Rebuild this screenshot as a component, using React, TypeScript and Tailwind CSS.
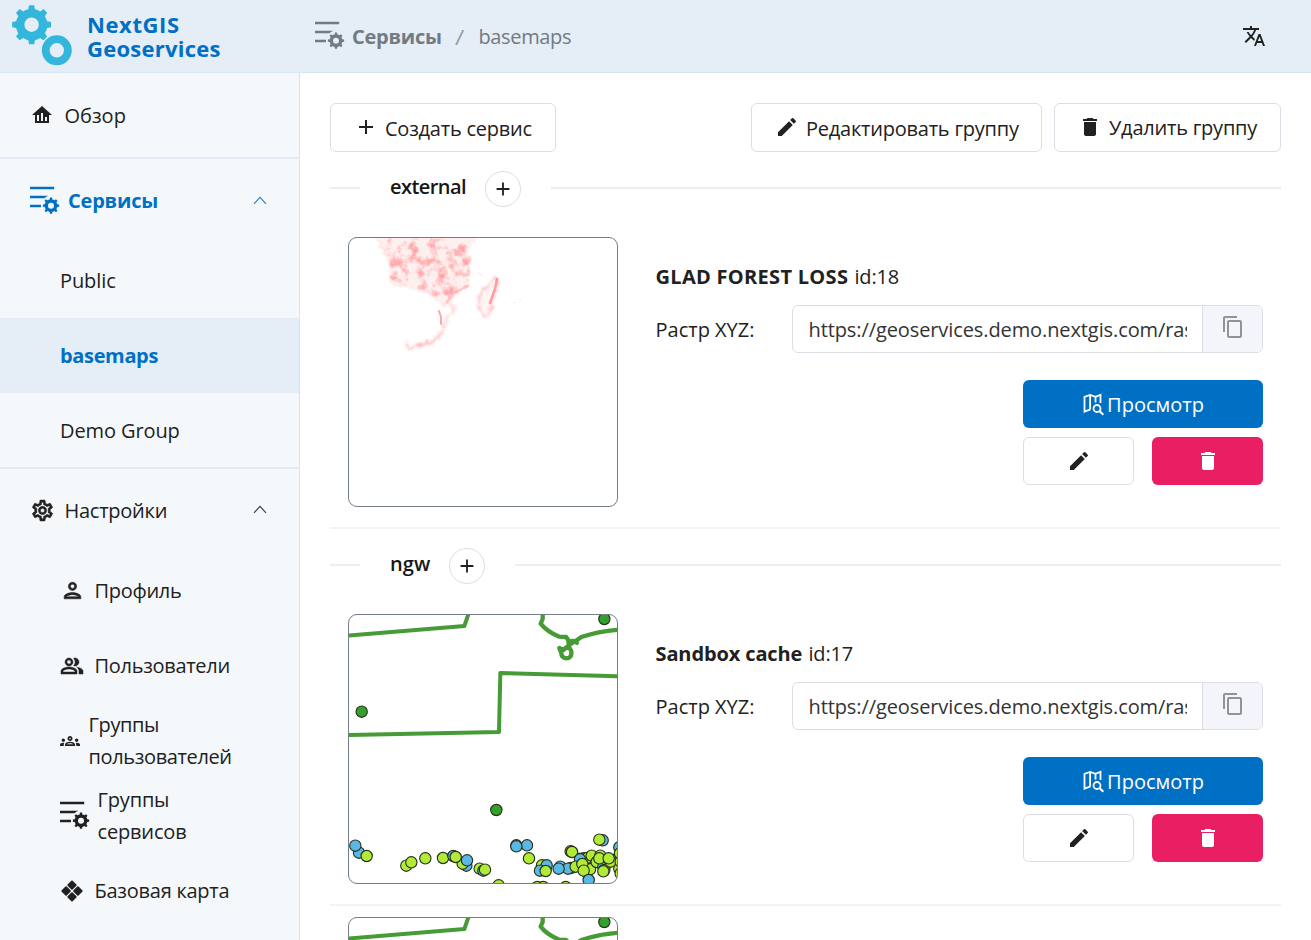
import type { ReactNode } from "react";
import {
  MdAdd,
  MdDelete,
  MdEdit,
  MdOutlineContentCopy,
  MdOutlineGroups,
  MdOutlinePeopleAlt,
  MdOutlinePerson,
  MdOutlineSettings,
  MdTranslate,
} from "react-icons/md";

/** Outline of a cog with `teeth` teeth, drawn around (cx, cy). */
function cog(cx: number, cy: number, outer: number, body: number, hole: number, teeth = 8) {
  const step = (Math.PI * 2) / teeth;
  const at = (r: number, a: number) => `${(cx + r * Math.cos(a)).toFixed(2)} ${(cy + r * Math.sin(a)).toFixed(2)}`;
  let d = "";
  for (let i = 0; i < teeth; i++) {
    const a = i * step - Math.PI / 2;
    d += `${i ? "L" : "M"}${at(body, a - step * 0.27)}L${at(outer, a - step * 0.17)}L${at(outer, a + step * 0.17)}L${at(body, a + step * 0.27)}`;
    d += `A${body} ${body} 0 0 1 ${at(body, a + step * 0.73)}`;
  }
  return `${d}ZM${cx - hole} ${cy}a${hole} ${hole} 0 1 0 ${hole * 2} 0a${hole} ${hole} 0 1 0 ${-hole * 2} 0Z`;
}

function Logo() {
  return (
    <svg width="64" height="64" viewBox="10 4 64 64" fill="#33b6dc" fillRule="evenodd">
      <path d={cog(31.6, 24.7, 19.6, 15.8, 7.2)} />
      <path d="M41.8 50.3a15 15 0 1 0 30 0a15 15 0 1 0 -30 0ZM49.6 50.3a7.2 7.2 0 1 0 14.4 0a7.2 7.2 0 1 0 -14.4 0Z" />
    </svg>
  );
}

function ListGear() {
  return (
    <svg width="30" height="30" viewBox="0 0.5 30 30" fill="currentColor" fillRule="evenodd" className="shrink-0">
      <path d="M0 1.2h24.2v2.6H0zM0 10.2h18.5q-2.5 .8-4 2.6H0zM0 19.2h11v2.6H0z" />
      <path d={cog(21, 20.2, 8.2, 6.4, 3)} />
    </svg>
  );
}

function HomeAnalytics() {
  return (
    <svg width="24" height="24" viewBox="0 0 24 24" fill="currentColor">
      <path d="M12 3L2 12H5V20H19V12H22L12 3M9 18H7V12H9V18M13 18H11V10H13V18M17 18H15V14H17V18Z" />
    </svg>
  );
}

function Diamonds() {
  return (
    <svg width="24" height="24" viewBox="0 0 24 24" fill="currentColor" stroke="currentColor" strokeWidth="1.8" strokeLinejoin="round">
      <path d="M12 2.3l3.8 3.8-3.8 3.8-3.8-3.8zM12 14.1l3.8 3.8-3.8 3.8-3.8-3.8zM6.1 8.2l3.8 3.8-3.8 3.8-3.8-3.8zM17.9 8.2l3.8 3.8-3.8 3.8-3.8-3.8z" />
    </svg>
  );
}

function MapSearch() {
  return (
    <svg width="24" height="24" viewBox="0.5 0 24 24" fill="none" stroke="currentColor" strokeWidth="1.8">
      <path d="M9 17.3L3 19.6V4.8L8.6 2.9L14 4.8L19 2.9V11M8.6 3V17M14 5V10.6" />
      <circle cx="15.5" cy="16.5" r="3.5" />
      <path d="M18 19L21.8 22.7" strokeWidth="2.1" />
    </svg>
  );
}

function Chevron() {
  return (
    <svg width="14" height="9" viewBox="0 0 14 9" fill="none" stroke="currentColor" strokeWidth="1.2" strokeOpacity=".85" className="mb-0.5">
      <path d="M1 7.8L7 1.4L13 7.8" />
    </svg>
  );
}

const LIME = "#b2eb36";
const BLUE = "#5ab9e4";
const GREEN = "#33a02c";

const points: [number, number, string][] = [
  [793, -513, GREEN], [65, -235, GREEN], [469, 60, GREEN],
  [57, 188, BLUE], [46, 167, BLUE], [80, 198, LIME],
  [199, 227, LIME], [214, 217, LIME], [256, 205, LIME], [309, 204, LIME],
  [340, 198, BLUE], [379, 227, BLUE], [368, 221, LIME], [347, 201, LIME], [381, 211, BLUE],
  [419, 236, LIME], [430, 242, BLUE], [435, 239, LIME],
  [529, 166, BLUE], [561, 166, BLUE], [529, 169, BLUE], [567, 205, LIME],
  [476, 286, LIME], [592, 291, LIME], [610, 291, LIME], [677, 291, LIME],
  [606, 226, LIME], [620, 226, BLUE], [600, 242, BLUE], [617, 243, LIME],
  [661, 230, BLUE], [692, 234, BLUE], [684, 236, BLUE], [656, 236, BLUE],
  [692, 184, LIME], [696, 186, LIME],
  [788, 151, BLUE], [778, 149, LIME],
  [732, 205, BLUE], [742, 204, LIME], [720, 208, BLUE], [755, 197, LIME],
  [707, 230, LIME], [750, 238, LIME], [727, 222, LIME], [731, 242, LIME],
  [781, 197, LIME], [770, 216, LIME], [790, 230, BLUE], [793, 240, LIME], [790, 244, LIME],
  [820, 210, BLUE], [812, 215, LIME], [778, 205, LIME], [806, 205, LIME],
  [838, 172, BLUE], [840, 190, LIME], [838, 236, LIME], [842, 215, LIME], [842, 250, LIME],
  [746, 270, BLUE],
];

function SandboxMap() {
  return (
    <svg width="268" height="268" viewBox="1 1 268 268">
      <g transform="translate(-8 176) scale(.33333)" strokeLinecap="round" strokeLinejoin="round">
        <g fill="none" stroke="#469b34" strokeWidth="12">
          <path d="M20 -463L373 -492L388 -535" />
          <path d="M20 -165L477 -174L481 -351L840 -341" />
          <path strokeWidth="13" d="M608 -531L608 -513L602 -499Q622 -474 658 -460L678 -459Q688 -451 686 -431L694 -416Q696 -395 678 -395Q664 -397 664 -410L658 -426L670 -420L690 -437L710 -449L724 -459Q780 -478 840 -481" />
          <path d="M694 -448L709 -447L711 -441" />
        </g>
        <path d="M712 188H750V200H712Z" fill="#26301c" />
        {points.map(([x, y, fill], i) => (
          <circle key={i} cx={x} cy={y} r="17" fill={fill} stroke="#26301c" strokeWidth="3.4" />
        ))}
      </g>
    </svg>
  );
}

const AFRICA = "M28 -4H127L122 10L119 18L120 30L121 48L107 55L102 65L94 67L82 57L55 48L43 47L42 25L34 12Z";

function ForestMap() {
  return (
    <svg width="268" height="268" viewBox="1 1 268 268">
      <defs>
        <filter id="coast" x="0" y="0" width="270" height="270" filterUnits="userSpaceOnUse">
          <feTurbulence type="fractalNoise" baseFrequency=".15" numOctaves="3" seed="3" result="n" />
          <feDisplacementMap in="SourceGraphic" in2="n" scale="10" xChannelSelector="R" yChannelSelector="G" />
          <feGaussianBlur stdDeviation=".8" />
        </filter>
        <filter id="loss" x="0" y="0" width="270" height="270" filterUnits="userSpaceOnUse">
          <feTurbulence type="fractalNoise" baseFrequency=".1" numOctaves="5" seed="8" result="n" />
          <feDisplacementMap in="SourceGraphic" in2="n" scale="9" xChannelSelector="R" yChannelSelector="G" result="shape" />
          <feGaussianBlur in="shape" stdDeviation=".8" result="soft" />
          <feColorMatrix in="n" type="matrix" values="0 0 0 0 1  0 0 0 0 .3  0 0 0 0 .32  0 3.4 0 0 -1.5" result="red" />
          <feComposite in="red" in2="soft" operator="in" />
        </filter>
      </defs>
      <g filter="url(#coast)" fill="#ff4a50" stroke="#ff4a50" fillOpacity=".09" strokeOpacity=".1">
        <path d={AFRICA} strokeWidth="1" />
        <path fill="none" strokeWidth="2.4" strokeOpacity=".2" d="M95 67L104 68L106 74L99 79L98 89L91 97L84 105L72 109L60 111L57 105" />
        <path strokeWidth="1.6" strokeOpacity=".35" fillOpacity=".06" d="M147 40L151 47L144 66L139 79L132 76L131 65L134 53L141 50Z" />
      </g>
      <g filter="url(#loss)">
        <path fill="#f00" fillOpacity=".8" d={AFRICA} />
        <path fill="none" stroke="#f00" strokeWidth="4" strokeOpacity=".8" d="M107 55L121 48M102 65L96 68M98 89L91 97L84 105L72 109L60 111L57 105M121 48L119 18" />
      </g>
      <g fill="none" stroke="#ff3f45" strokeLinecap="round">
        <path d="M149 42L147 52L142 66" strokeWidth="2.6" strokeOpacity=".45" />
        <path d="M91 74L93 80V87" strokeWidth="2" strokeOpacity=".45" />
        <path d="M108 55L120 49M99 65L102 61" strokeWidth="3" strokeOpacity=".22" />
        <path d="M44 40L52 44M66 17L69 14M95 40L98 36" strokeWidth="4" strokeOpacity=".18" />
        <path d="M166 65.5h1M172 63h.6M131 36l3 3" strokeOpacity=".18" />
      </g>
    </svg>
  );
}

function MenuItem({ icon, children, gap, tracking }: { icon?: ReactNode; children: ReactNode; gap?: string; tracking?: string }) {
  return (
    <div className={`flex h-[75px] items-center pl-[60px] leading-8 ${gap ?? "gap-[10.5px]"} ${tracking ?? "tracking-[-0.3px]"}`}>
      {icon}
      <span>{children}</span>
    </div>
  );
}

function SectionTitle({ children, tracking }: { children: ReactNode; tracking: string }) {
  return (
    <div className="flex h-9 items-center">
      <div className="h-0.5 w-[30px] bg-[#ededf3]" />
      <h2 className={`mb-0.5 ml-[30px] text-[20px] font-semibold text-[#161616] ${tracking}`}>{children}</h2>
      <button className="mt-0.5 ml-[18.5px] flex size-9 shrink-0 items-center justify-center rounded-full border border-[#dddde5]">
        <MdAdd className="size-[22px]" />
      </button>
      <div className="ml-[30px] h-0.5 flex-1 bg-[#ededf3]" />
    </div>
  );
}

function ServiceCard({ map, name, id, url, tracking }: { map: ReactNode; name: string; id: number; url: string; tracking: string }) {
  return (
    <article className="flex h-[292px] border-b-2 border-[#f3f3f8] px-[18px]">
      <div className="size-[270px] shrink-0 overflow-hidden rounded-[9px] border border-[#747d86]">{map}</div>
      <div className="ml-[37.5px] flex flex-1 flex-col">
        <p className="mt-6 h-8 leading-8">
          <b className={tracking}>{name}</b> <span className="ml-px tracking-[-0.15px]">id:{id}</span>
        </p>
        <div className="mt-3 flex h-12 items-center">
          <label className="w-[136.5px] pt-0.5">Растр XYZ:</label>
          <div className="flex h-12 w-[471px] overflow-hidden rounded-md border border-[#dddde5]">
            <div className="flex flex-1 items-center px-[15px] pt-0.5">
              <span className="w-[379px] overflow-hidden pl-[0.5px] whitespace-nowrap tracking-[-0.1px] text-[#333]">{url}</span>
            </div>
            <button className="flex w-[61px] items-center justify-center border-l border-[#dddde5] bg-[#f4f5fa] text-[#929297]">
              <MdOutlineContentCopy className="mb-1 size-6" />
            </button>
          </div>
        </div>
        <div className="mt-[27px] flex w-60 flex-col gap-[9px] self-end">
          <button className="flex h-12 items-center justify-center rounded-md bg-[#0070c5] text-white">
            <MapSearch />
            <span className="ml-px pt-0.5">Просмотр</span>
          </button>
          <div className="flex justify-between">
            <button className="flex h-12 w-[111px] items-center justify-center rounded-md border border-[#dddde5]">
              <MdEdit className="size-6" />
            </button>
            <button className="flex h-12 w-[111px] items-center justify-center rounded-md bg-[#ea1e63] text-white">
              <MdDelete className="size-6" />
            </button>
          </div>
        </div>
      </div>
    </article>
  );
}

const toolButton = "flex h-[49px] items-center rounded-md border border-[#dddde5] bg-white tracking-[-0.23px]";
const heavy = "[&_path]:stroke-[0.5px] [&_path[fill=none]]:stroke-none";

export default function App() {
  return (
    <div className="flex h-[940px] w-[1311px] flex-col overflow-hidden bg-white font-['Open_Sans','Noto_Sans',sans-serif] text-[20px] leading-8 text-[#212121]">
      <header className="flex h-[73px] shrink-0 items-center border-b border-[#d8e6f4] bg-[#e5edf6]">
        <div className="flex w-[315px] items-center pl-[10px]">
          <Logo />
          <div className="ml-[13px] text-[22px] leading-6 font-bold text-[#0070c5]">
            <div className="tracking-[0.6px]">NextGIS</div>
            <div className="tracking-[0.25px]">Geoservices</div>
          </div>
        </div>
        <nav className="flex flex-1 items-center text-[#727a82]">
          <ListGear />
          <b className="ml-[7px] pt-0.5 tracking-[-0.25px]">Сервисы</b>
          <span className="mr-[15px] ml-[14px] inline-block pt-0.5 text-[21px] -skew-x-6 text-[#8f959b]">/</span>
          <span className="pt-0.5 tracking-[-0.35px]">basemaps</span>
        </nav>
        <MdTranslate className="mr-[45px] size-6" />
      </header>
      <div className="flex min-h-0 flex-1">
        <aside className="w-[300px] shrink-0 overflow-hidden border-r border-[#d5e2f0] bg-[#f4f8fb]">
          <div className="flex h-[86px] items-center gap-[10.5px] border-b-2 border-[#e2ebf4] pl-[30px]">
            <HomeAnalytics /><span className="pt-[1px]">Обзор</span>
          </div>
          <div className="flex h-[84px] items-center pr-8 pl-[30px] text-[#0070c5]">
            <ListGear /><b className="ml-2 flex-1 tracking-[-0.2px]">Сервисы</b><Chevron />
          </div>
          <MenuItem tracking="tracking-[-0.1px]">Public</MenuItem>
          <div className="bg-[#e5edf6] font-bold text-[#0070c5]"><MenuItem tracking="tracking-[-0.35px]">basemaps</MenuItem></div>
          <MenuItem tracking="tracking-[-0.1px]">Demo Group</MenuItem>
          <div className="-mt-px flex h-[86px] items-center border-t-2 border-[#e2ebf4] pr-8 pb-px pl-[30px]">
            <MdOutlineSettings className={`size-[25px] ${heavy}`} /><span className="ml-[9.5px] flex-1 pt-px tracking-[-0.25px]">Настройки</span><Chevron />
          </div>
          <MenuItem icon={<MdOutlinePerson className={`size-[25px] ${heavy}`} />} gap="gap-[9.5px]">Профиль</MenuItem>
          <MenuItem icon={<MdOutlinePeopleAlt className={`size-6 ${heavy}`} />}>Пользователи</MenuItem>
          <MenuItem icon={<MdOutlineGroups className="size-5" />} gap="gap-[8.5px]" tracking="tracking-[-0.37px]">Группы<br />пользователей</MenuItem>
          <MenuItem icon={<ListGear />} gap="gap-[7.5px]" tracking="tracking-[-0.17px]">Группы<br />сервисов</MenuItem>
          <MenuItem icon={<Diamonds />} tracking="tracking-[-0.25px]">Базовая карта</MenuItem>
        </aside>
        <main className="flex-1 px-[30px] pt-[30px]">
          <div className="flex gap-3">
            <button className={`${toolButton} mr-auto w-[226px] pl-[23px]`}>
              <MdAdd className="mb-0.5 size-6" /><span className="ml-[7px] pt-0.5">Создать сервис</span>
            </button>
            <button className={`${toolButton} w-[291px] pl-[23px]`}>
              <MdEdit className="mb-0.5 size-6" /><span className="ml-[7px] pt-0.5">Редактировать группу</span>
            </button>
            <button className={`${toolButton} w-[227px] pl-[23px]`}>
              <MdDelete className="mb-0.5 size-6" /><span className="ml-[7px]">Удалить группу</span>
            </button>
          </div>
          <div className="mt-[18px]"><SectionTitle tracking="tracking-[-0.55px]">external</SectionTitle></div>
          <div className="mt-[31px]">
            <ServiceCard map={<ForestMap />} name="GLAD FOREST LOSS" id={18} url="https://geoservices.demo.nextgis.com/raster/" tracking="tracking-[0.3px]" />
          </div>
          <div className="mt-[18px]"><SectionTitle tracking="tracking-[0.1px]">ngw</SectionTitle></div>
          <div className="mt-[31px]">
            <ServiceCard map={<SandboxMap />} name="Sandbox cache" id={17} url="https://geoservices.demo.nextgis.com/raster/" tracking="tracking-[-0.12px]" />
          </div>
          <div className="mt-[11px] ml-[18px] size-[270px] overflow-hidden rounded-[9px] border border-[#747d86]">
            <SandboxMap />
          </div>
        </main>
      </div>
    </div>
  );
}
